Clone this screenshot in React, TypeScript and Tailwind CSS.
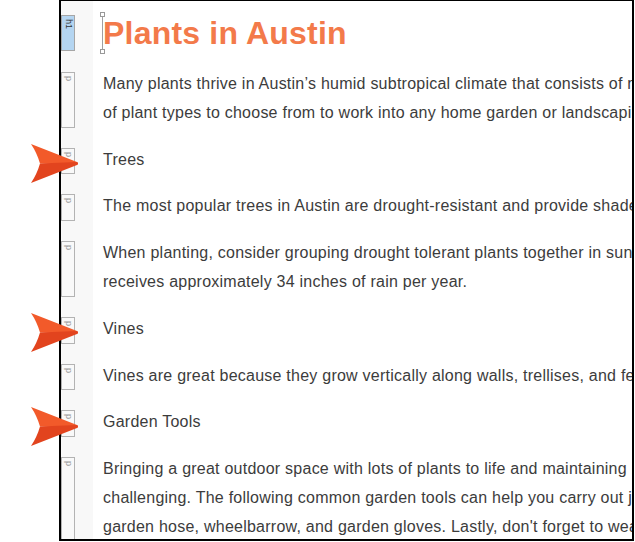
import React from "react";

type Block = {
  tag: "h1" | "p";
  lines: string[];
};

const blocks: Block[] = [
  { tag: "h1", lines: ["Plants in Austin"] },
  {
    tag: "p",
    lines: [
      "Many plants thrive in Austin’s humid subtropical climate that consists of mild winters and hot summers. There is a wide variety",
      "of plant types to choose from to work into any home garden or landscaping project.",
    ],
  },
  { tag: "p", lines: ["Trees"] },
  {
    tag: "p",
    lines: [
      "The most popular trees in Austin are drought-resistant and provide shade from the hot Texas sun.",
    ],
  },
  {
    tag: "p",
    lines: [
      "When planting, consider grouping drought tolerant plants together in sunny areas of your landscape. On average, Austin",
      "receives approximately 34 inches of rain per year.",
    ],
  },
  { tag: "p", lines: ["Vines"] },
  {
    tag: "p",
    lines: [
      "Vines are great because they grow vertically along walls, trellises, and fences.",
    ],
  },
  { tag: "p", lines: ["Garden Tools"] },
  {
    tag: "p",
    lines: [
      "Bringing a great outdoor space with lots of plants to life and maintaining it can be",
      "challenging. The following common garden tools can help you carry out just about any task: shovel, rake,",
      "garden hose, wheelbarrow, and garden gloves. Lastly, don't forget to wear sunscreen!",
    ],
  },
];

// orange callout arrow pointing right
const Arrow: React.FC<{ top: string }> = ({ top }) => (
  <svg
    className={`absolute left-[31px] ${top}`}
    width="48"
    height="40"
    viewBox="0 0 48 40"
  >
    <path d="M0 0 L46 18 Q48 19.5 46 21 L9 19.5 Q6 9 0 0 Z" fill="#f25a2a" />
    <path d="M0 39 L46 21 Q48 19.5 46 18 L9 19.5 Q6 30 0 39 Z" fill="#e2441e" />
  </svg>
);

const TagBox: React.FC<{ tag: "h1" | "p" }> = ({ tag }) =>
  tag === "h1" ? (
    <div className="flex-1 w-[14px] border border-[#a6a6a6] bg-[#b4d5f1] flex justify-center pt-[3px]">
      <span className="[writing-mode:vertical-rl] text-[9px] leading-[9px] text-[#333] font-['Liberation_Sans',sans-serif]">
        h1
      </span>
    </div>
  ) : (
    <div className="flex-1 mt-[2px] w-[14px] border border-[#b3b3b3] bg-[#f9f9f9] flex justify-center pt-[3px]">
      <span className="[writing-mode:vertical-rl] text-[9px] leading-[9px] text-[#999] font-['Liberation_Sans',sans-serif]">
        p
      </span>
    </div>
  );

export default function App() {
  return (
    <div className="relative w-[635px] h-[542px] bg-white overflow-hidden font-['Liberation_Sans',Arial,sans-serif]">
      <div className="ml-[59px] w-[575px] h-[541px] border-l-2 border-t border-r-2 border-b-2 border-black overflow-hidden">
        <div className="grid grid-cols-[32px_1fr]">
          {blocks.map((b, i) => (
            <React.Fragment key={i}>
              <div
                className={`flex flex-col bg-[#f8f8f8] ${i === 0 ? "pt-[14px] pb-[19px]" : "pb-[18px]"}`}
              >
                <TagBox tag={b.tag} />
              </div>
              <div
                className={`relative pl-[10px] whitespace-nowrap ${i === 0 ? "pt-[14px] pb-[19px]" : "pb-[18px]"}`}
              >
                {b.tag === "h1" ? (
                  <>
                    {/* selection caret with handles */}
                    <div className="absolute left-[9px] top-[14px] h-[36px] w-px bg-[#a0a0a0]" />
                    <div className="absolute left-[7px] top-[11px] w-[5px] h-[5px] border border-[#999] bg-white" />
                    <div className="absolute left-[7px] top-[48px] w-[5px] h-[5px] border border-[#999] bg-white" />
                    <h1 className="text-[32px] leading-[36px] font-bold tracking-[0.2px] text-[#f37a4a]">
                      {b.lines[0]}
                    </h1>
                  </>
                ) : (
                  <p className="text-[16px] leading-[28.8px] tracking-[0.24px] text-[#3c3c3c]">
                    {b.lines.map((l, j) => (
                      <React.Fragment key={j}>
                        {l}
                        {j < b.lines.length - 1 && <br />}
                      </React.Fragment>
                    ))}
                  </p>
                )}
              </div>
            </React.Fragment>
          ))}
        </div>
      </div>
      <Arrow top="top-[144px]" />
      <Arrow top="top-[313px]" />
      <Arrow top="top-[407px]" />
    </div>
  );
}
